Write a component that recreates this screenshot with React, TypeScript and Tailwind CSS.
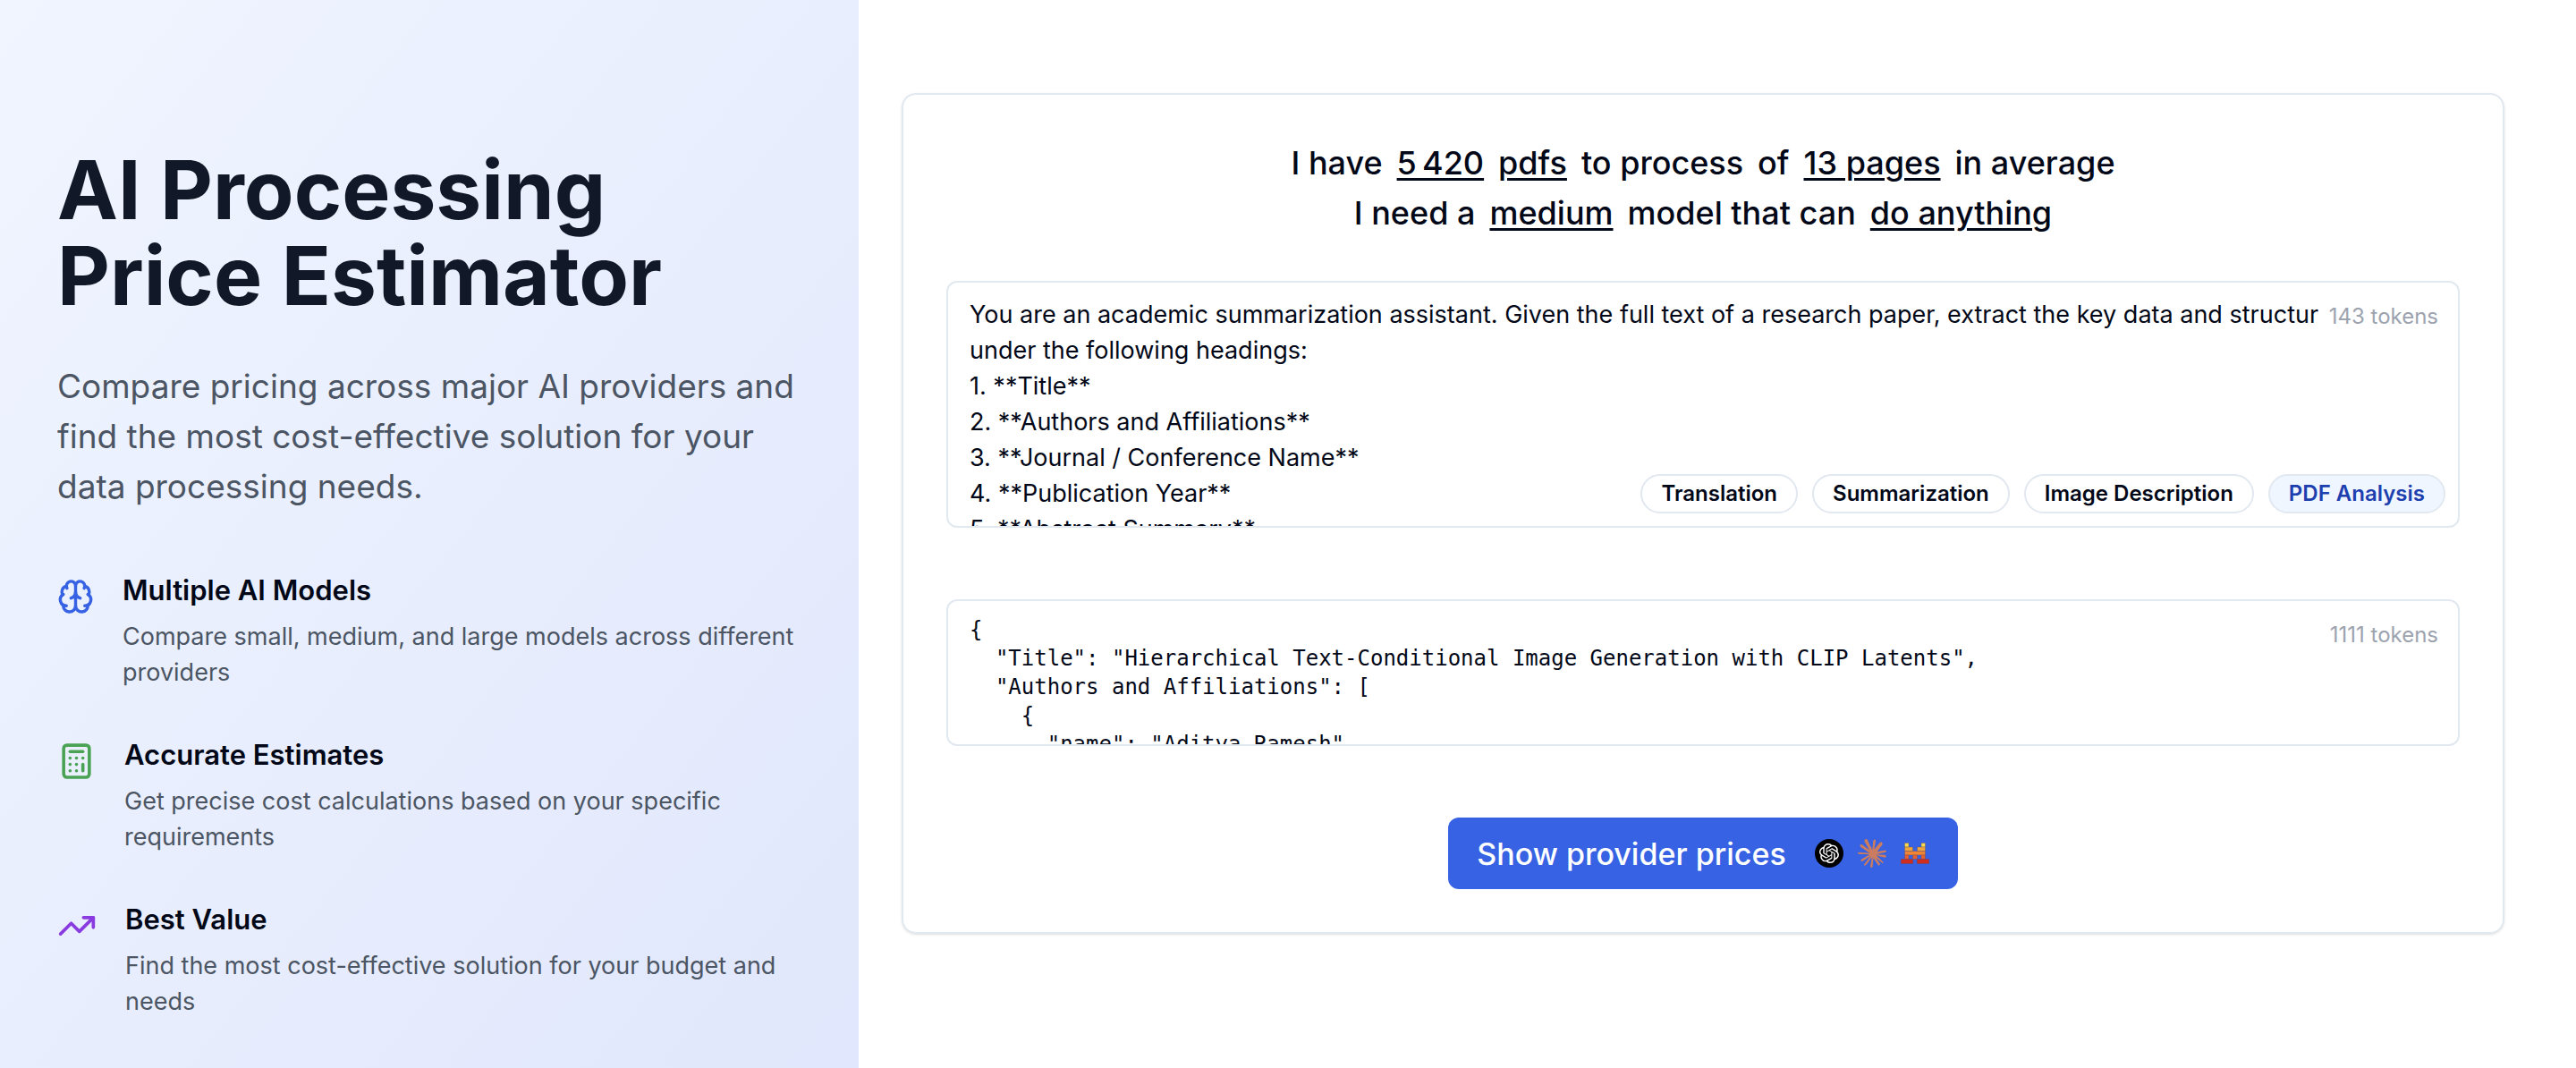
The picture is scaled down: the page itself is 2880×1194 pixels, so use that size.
import { Brain, Calculator, TrendingUp } from "lucide-react";
import { SiOpenai, SiClaude } from "react-icons/si";

const features = [
  {
    icon: <Brain className="mt-[7px] h-12 w-[41px] shrink-0 text-[#3662e3]" />,
    title: "Multiple AI Models",
    text: "Compare small, medium, and large models across different providers",
  },
  {
    icon: <Calculator className="mt-[7px] h-12 w-[43px] shrink-0 text-[#4aa354]" />,
    title: "Accurate Estimates",
    text: "Get precise cost calculations based on your specific requirements",
  },
  {
    icon: <TrendingUp className="mt-[7px] h-12 w-[44px] shrink-0 text-[#8a3be0]" />,
    title: "Best Value",
    text: "Find the most cost-effective solution for your budget and needs",
  },
];

const prompt = `You are an academic summarization assistant. Given the full text of a research paper, extract the key data and structure it
under the following headings:
1. **Title**
2. **Authors and Affiliations**
3. **Journal / Conference Name**
4. **Publication Year**
5. **Abstract Summary**`;

const output = `{
  "Title": "Hierarchical Text-Conditional Image Generation with CLIP Latents",
  "Authors and Affiliations": [
    {
      "name": "Aditya Ramesh",`;

const presets = ["Translation", "Summarization", "Image Description", "PDF Analysis"];

function MistralLogo() {
  return (
    <svg viewBox="0 0 32 32" className="size-8" stroke="#5b4a5e" strokeOpacity="0.6" strokeWidth="0.6" aria-hidden="true">
      <path fill="#fbd94a" d="M4.5 4.5H9V9H4.5zM23 4.5h4.5V9H23z" />
      <path fill="#f0a63c" d="M4.5 9h9v4.5h-9zM18.5 9h9v4.5h-9z" />
      <path fill="#ee8434" d="M4.5 13.5h23V18h-23z" />
      <path fill="#e95f2d" d="M4.5 18H9v4.5H4.5zM13.5 18h5v4.5h-5zM23 18h4.5v4.5H23z" />
      <path fill="#d02d1f" d="M.3 22.5h13.4v5H.3zM18.3 22.5h13.4v5H18.3z" />
    </svg>
  );
}

function Choice({ children }: { children: string }) {
  return (
    <button type="button" className="underline decoration-3 underline-offset-4">
      {children}
    </button>
  );
}

export default function App() {
  return (
    <div className="flex min-h-screen items-stretch bg-white font-['Inter',sans-serif] text-[#020817]">
      <aside className="w-1/3 bg-linear-to-br from-[#f0f5ff] to-[#e1e7fc] pt-41 pr-14 pb-12 pl-16">
        <h1 className="text-[91px] leading-24 font-bold text-[#111827]">
          AI Processing
          <br />
          Price Estimator
        </h1>
        <p className="mt-12 text-[37px] leading-14 text-[#4b5563]">
          Compare pricing across major AI providers and find the most cost-effective solution for your data
          processing needs.
        </p>
        <ul className="mt-16 flex flex-col gap-12">
          {features.map((f) => (
            <li key={f.title} className="flex items-start gap-8">
              {f.icon}
              <div>
                <h3 className="text-[31px] leading-12 font-semibold">{f.title}</h3>
                <p className="mt-2 text-[27px] leading-10 text-[#4b5563]">{f.text}</p>
              </div>
            </li>
          ))}
        </ul>
      </aside>

      <main className="min-w-0 flex-1 pt-26 pr-20 pb-20 pl-12">
        <section className="flex flex-col items-center rounded-2xl border-2 border-[#e2e8f0] p-12 shadow-sm">
          <div className="text-4xl leading-14 font-medium">
            <p className="flex justify-center gap-4">
              <span>I have</span>
              <Choice>{"5\u202f420"}</Choice>
              <Choice>pdfs</Choice>
              <span>to process</span>
              <span>of</span>
              <Choice>13 pages</Choice>
              <span>in average</span>
            </p>
            <p className="flex justify-center gap-4">
              <span>I need a</span>
              <Choice>medium</Choice>
              <span>model that can</span>
              <Choice>do anything</Choice>
            </p>
          </div>

          <div className="relative mt-12 w-full">
            <textarea
              aria-label="Prompt"
              defaultValue={prompt}
              className="block h-69 w-full resize-none overflow-hidden rounded-xl border-2 border-[#e2e8f0] px-6 py-4 text-[27px] leading-10"
            />
            <span className="absolute top-6 right-6 bg-white pl-3 text-2xl leading-8 text-[#9ca3af]">143 tokens</span>
            <div className="absolute right-4 bottom-4 flex gap-4">
              {presets.map((p) => (
                <button
                  key={p}
                  type="button"
                  aria-pressed={p === "PDF Analysis"}
                  className="h-11 rounded-full border-2 border-[#e2e8f0] bg-white px-[21px] text-2xl leading-8 font-semibold aria-pressed:bg-[#eff6ff] aria-pressed:text-[#1e40af]"
                >
                  {p}
                </button>
              ))}
            </div>
          </div>

          <div className="relative mt-20 w-full">
            <textarea
              aria-label="Expected output"
              defaultValue={output}
              className="block h-41 w-full resize-none overflow-hidden rounded-xl border-2 border-[#e2e8f0] px-6 py-4 font-['DejaVu_Sans_Mono',monospace] text-2xl leading-8"
            />
            <span className="absolute top-6 right-6 bg-white pl-3 text-2xl leading-8 text-[#9ca3af]">1111 tokens</span>
          </div>

          <button
            type="button"
            className="mt-20 flex h-20 items-center gap-8 rounded-xl bg-[#3662e3] px-8 text-[34px] font-medium text-white"
          >
            Show provider prices
            <span className="flex items-center gap-4">
              <span className="flex size-8 items-center justify-center rounded-full bg-black">
                <SiOpenai className="size-[22px]" />
              </span>
              <SiClaude className="size-8 text-[#cc7c5e]" />
              <MistralLogo />
            </span>
          </button>
        </section>
      </main>
    </div>
  );
}
